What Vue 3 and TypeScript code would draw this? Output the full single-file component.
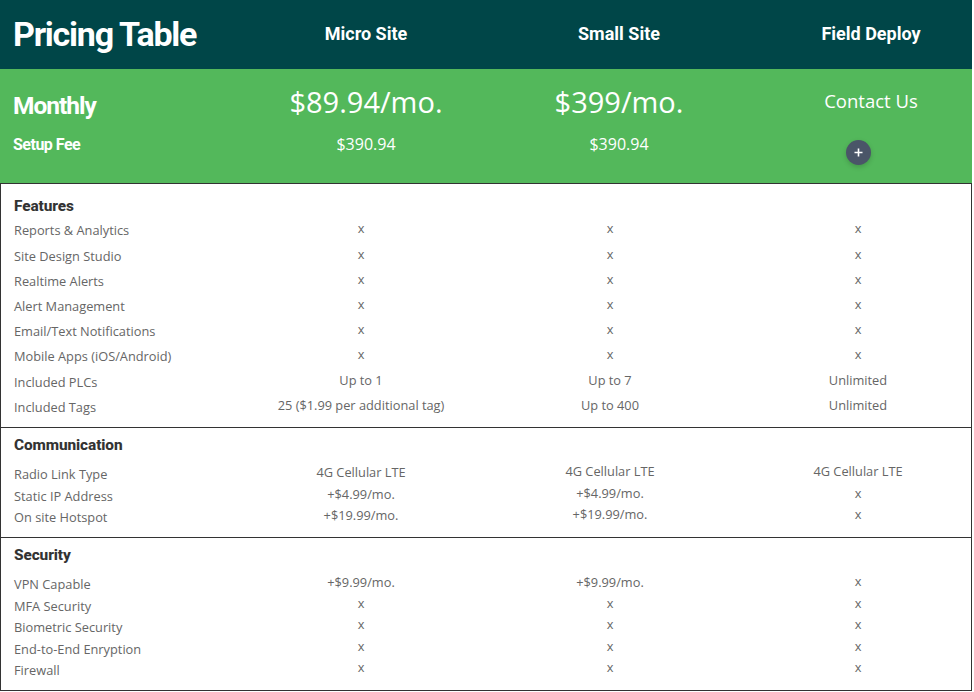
<script setup lang="ts">
interface Row { label: string; values: string[] }
interface Section { title: string; kind: string; rows: Row[] }
const x = ['x', 'x', 'x'];
const sections: Section[] = [
  { title: 'Features', kind: 'features', rows: [
    { label: 'Reports & Analytics', values: x },
    { label: 'Site Design Studio', values: x },
    { label: 'Realtime Alerts', values: x },
    { label: 'Alert Management', values: x },
    { label: 'Email/Text Notifications', values: x },
    { label: 'Mobile Apps (iOS/Android)', values: x },
    { label: 'Included PLCs', values: ['Up to 1', 'Up to 7', 'Unlimited'] },
    { label: 'Included Tags', values: ['25 ($1.99 per additional tag)', 'Up to 400', 'Unlimited'] },
  ] },
  { title: 'Communication', kind: 'compact', rows: [
    { label: 'Radio Link Type', values: ['4G Cellular LTE', '4G Cellular LTE', '4G Cellular LTE'] },
    { label: 'Static IP Address', values: ['+$4.99/mo.', '+$4.99/mo.', 'x'] },
    { label: 'On site Hotspot', values: ['+$19.99/mo.', '+$19.99/mo.', 'x'] },
  ] },
  { title: 'Security', kind: 'compact', rows: [
    { label: 'VPN Capable', values: ['+$9.99/mo.', '+$9.99/mo.', 'x'] },
    { label: 'MFA Security', values: x },
    { label: 'Biometric Security', values: x },
    { label: 'End-to-End Enryption', values: x },
    { label: 'Firewall', values: x },
  ] },
];
</script>

<template>
  <div class="page">
    <header class="plans">
      <h1>Pricing Table</h1>
      <h2>Micro Site</h2>
      <h2>Small Site</h2>
      <h2>Field Deploy</h2>
    </header>
    <section class="prices">
      <div class="price-row">
        <h3>Monthly</h3>
        <div class="amount">$89.94/mo.</div>
        <div class="amount">$399/mo.</div>
        <div class="contact">Contact Us</div>
      </div>
      <div class="price-row setup">
        <h4>Setup Fee</h4>
        <div class="fee">$390.94</div>
        <div class="fee">$390.94</div>
        <div class="fee">
          <button class="more" aria-label="More">
            <svg width="11" height="11" viewBox="0 0 11 11"><path d="M5.5 1.5v8M1.5 5.5h8" stroke="#fff" stroke-width="1.6" fill="none" /></svg>
          </button>
        </div>
      </div>
    </section>
    <main class="table">
      <section v-for="s in sections" :key="s.title" class="group" :class="s.kind">
        <h5>{{ s.title }}</h5>
        <div v-for="r in s.rows" :key="r.label" class="row">
          <div class="label">{{ r.label }}</div>
          <div v-for="(v, i) in r.values" :key="i" class="val" :class="{ mark: v === 'x', up: i === 1 && s.title === 'Communication', far: i === 2 && s.title === 'Communication' && v !== 'x' }">{{ v }}</div>
        </div>
      </section>
    </main>
  </div>
</template>

<style>
html, body { background: #fff; }
</style>

<style scoped>
.page { width: 972px; font-family: "Open Sans", sans-serif; }
h1, h2, h3, h4, h5 { margin: 0; font-family: Roboto, sans-serif; font-weight: 700; }
.plans {
  height: 69px; padding-bottom: 2px; box-sizing: border-box; background: #004648; color: #fff;
  display: grid; grid-template-columns: 264px 204px 302px 202px; align-items: center; text-align: center;
}
.plans h1 { font-size: 34px; letter-spacing: -1.25px; text-align: left; padding-left: 13px; }
.plans h2 { font-size: 18px; }
.prices { height: 114px; background: #53b85b; color: #fff; box-sizing: border-box; padding-top: 14px; }
.price-row { display: grid; grid-template-columns: 264px 204px 302px 202px; align-items: center; text-align: center; }
.price-row h3 { font-size: 24.5px; letter-spacing: -1px; text-align: left; padding-left: 13px; margin-top: 7px; }
.price-row h4 { font-size: 16px; letter-spacing: -0.5px; text-align: left; padding-left: 13px; }
.amount { font-size: 29px; line-height: 38px; }
.contact { font-size: 18.5px; line-height: 34px; margin-bottom: 2px; }
.setup { margin-top: 12px; }
.setup .fee { font-size: 16px; line-height: 22px; }
.setup .fee:last-child { height: 22px; }
.more {
  display: inline-flex; align-items: center; justify-content: center;
  width: 25px; height: 25px; padding: 0; border: 0; border-radius: 50%;
  background: #4a5568; box-shadow: 0 2px 5px rgba(0,0,0,.18);
  position: relative; top: 7px; left: -13px;
}
.table { border: 1px solid #333; height: 508px; box-sizing: border-box; color: #666; font-size: 12.8px; }
.group + .group { border-top: 1px solid #333; }
.features { height: 243px; padding-top: 12px; box-sizing: border-box; }
.features h5 { margin-bottom: 1.3px; }
.features .label { padding-top: 1px; }
.compact { padding-top: 7px; box-sizing: border-box; }
.compact:nth-child(2) { height: 110px; }
h5 { font-size: 15.4px; font-weight: 800; letter-spacing: -0.1px; line-height: 20px; color: #333; padding-left: 13px; }
.compact h5 { margin-bottom: 8.3px; }
.row { display: grid; grid-template-columns: 246px 228px 270px 226px; align-items: center; height: 25.2px; }
.compact .row { height: 21.5px; }
.label { padding-left: 13px; line-height: 18px; }
.val { text-align: center; line-height: 18px; margin-top: -3px; }
.compact .val { margin-top: -4px; }
.compact .val.mark { margin-top: -6px; }
.compact .val.up { margin-top: -6px; }
.compact .val.far { margin-top: -6px; }
</style>
